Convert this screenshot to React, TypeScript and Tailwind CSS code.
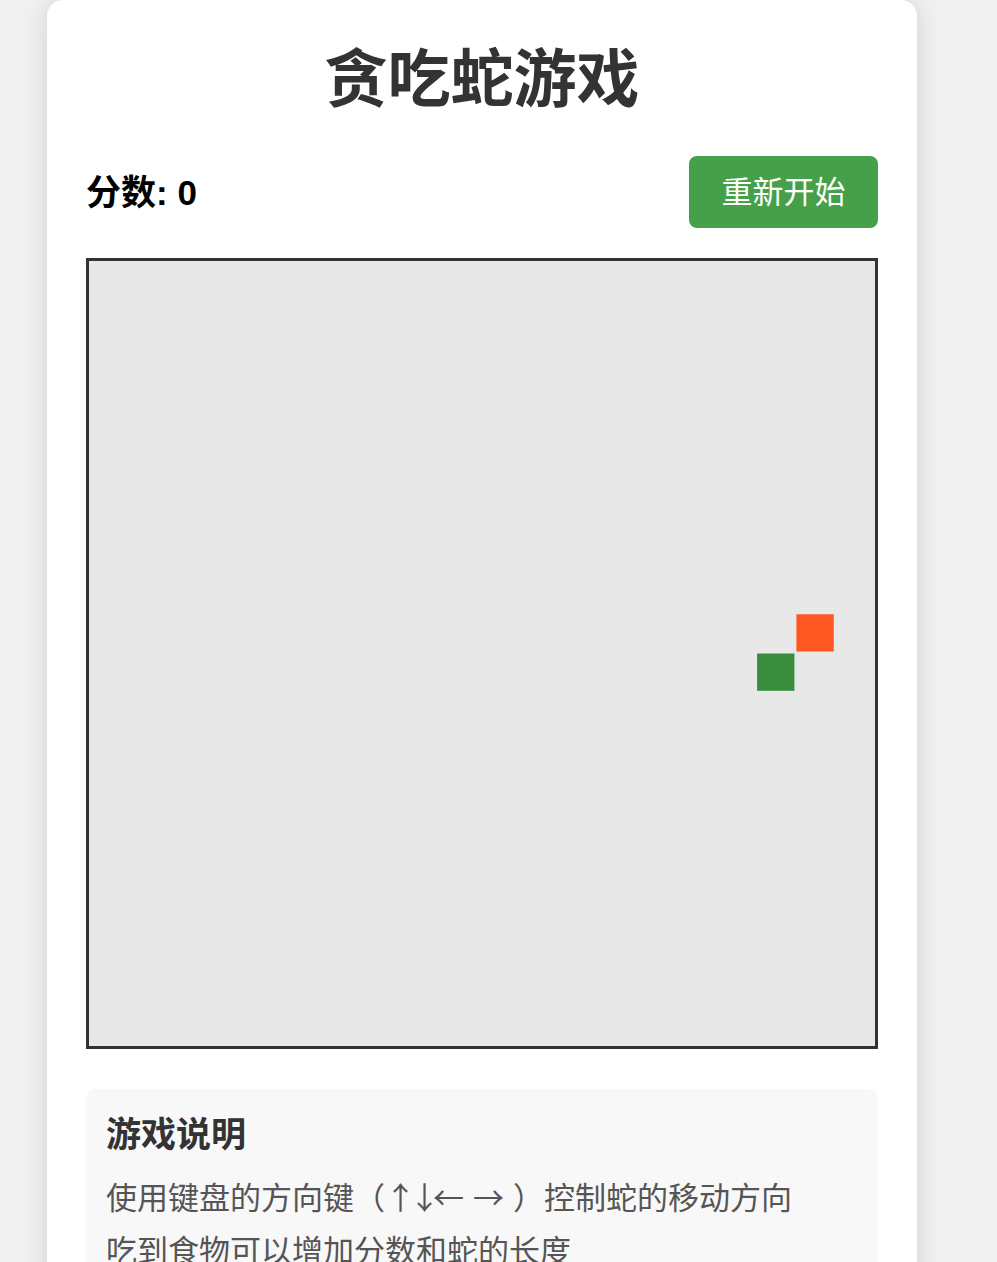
import React from "react";

const FONT = "font-['Liberation_Sans','Noto_Sans_CJK_SC',sans-serif]";
const CJK = "font-['Noto_Sans_CJK_SC',sans-serif]";

// 20x20 board, cell = 20 units in a 400 viewBox
const snake = [{ x: 17, y: 10 }];
const food = { x: 18, y: 9 };

function Board() {
    return (
        <div className="w-[792px] h-[791px] border-[3px] border-[#333] bg-[#e8e8e8]">
            <svg width="786" height="785" viewBox="0 0 400 400" preserveAspectRatio="none" className="block">
                {snake.map((s, i) => (
                    <rect key={i} x={s.x * 20} y={s.y * 20} width="19" height="19" fill="#388e3c" />
                ))}
                <rect x={food.x * 20} y={food.y * 20} width="19" height="19" fill="#ff5722" />
            </svg>
        </div>
    );
}

export default function App() {
    return (
        <div className={`min-h-[1262px] bg-[#f0f0f0] flex ${FONT}`}>
            <div className="ml-[47px] w-[870px] bg-white rounded-t-[16px] shadow-[0_0_24px_rgba(0,0,0,0.12)] px-[39px] pt-[41px] pb-[40px]">
                {/* Title */}
                <h1 className="text-[63px] leading-[76px] font-bold text-[#333] text-center">
                    贪吃蛇游戏
                </h1>

                {/* Score + restart */}
                <div className="mt-[39px] flex items-center justify-between h-[72px]">
                    <div className="text-[35px] font-bold text-black pt-[3px]">分数: 0</div>
                    <button className="w-[189px] h-[72px] rounded-[8px] bg-[#45a049] text-white text-[31px] leading-none">
                        重新开始
                    </button>
                </div>

                {/* Game board */}
                <div className="mt-[30px]">
                    <Board />
                </div>

                {/* Instructions */}
                <div className="mt-[40px] bg-[#f8f8f8] rounded-[9px] px-[20px] pt-[22px] pb-[20px]">
                    <h3 className="text-[35px] leading-[48px] font-bold text-[#333]">游戏说明</h3>
                    <p className={`mt-[14px] text-[31px] leading-[46px] text-[#555] whitespace-nowrap ${CJK}`}>
                        使用键盘的方向键（<span className="tracking-[-7px]">↑↓</span><span className="tracking-[9px]">←→</span>）控制蛇的移动方向
                    </p>
                    <p className={`mt-[7px] text-[31px] leading-[46px] text-[#555] ${CJK}`}>
                        吃到食物可以增加分数和蛇的长度
                    </p>
                </div>
            </div>
        </div>
    );
}
